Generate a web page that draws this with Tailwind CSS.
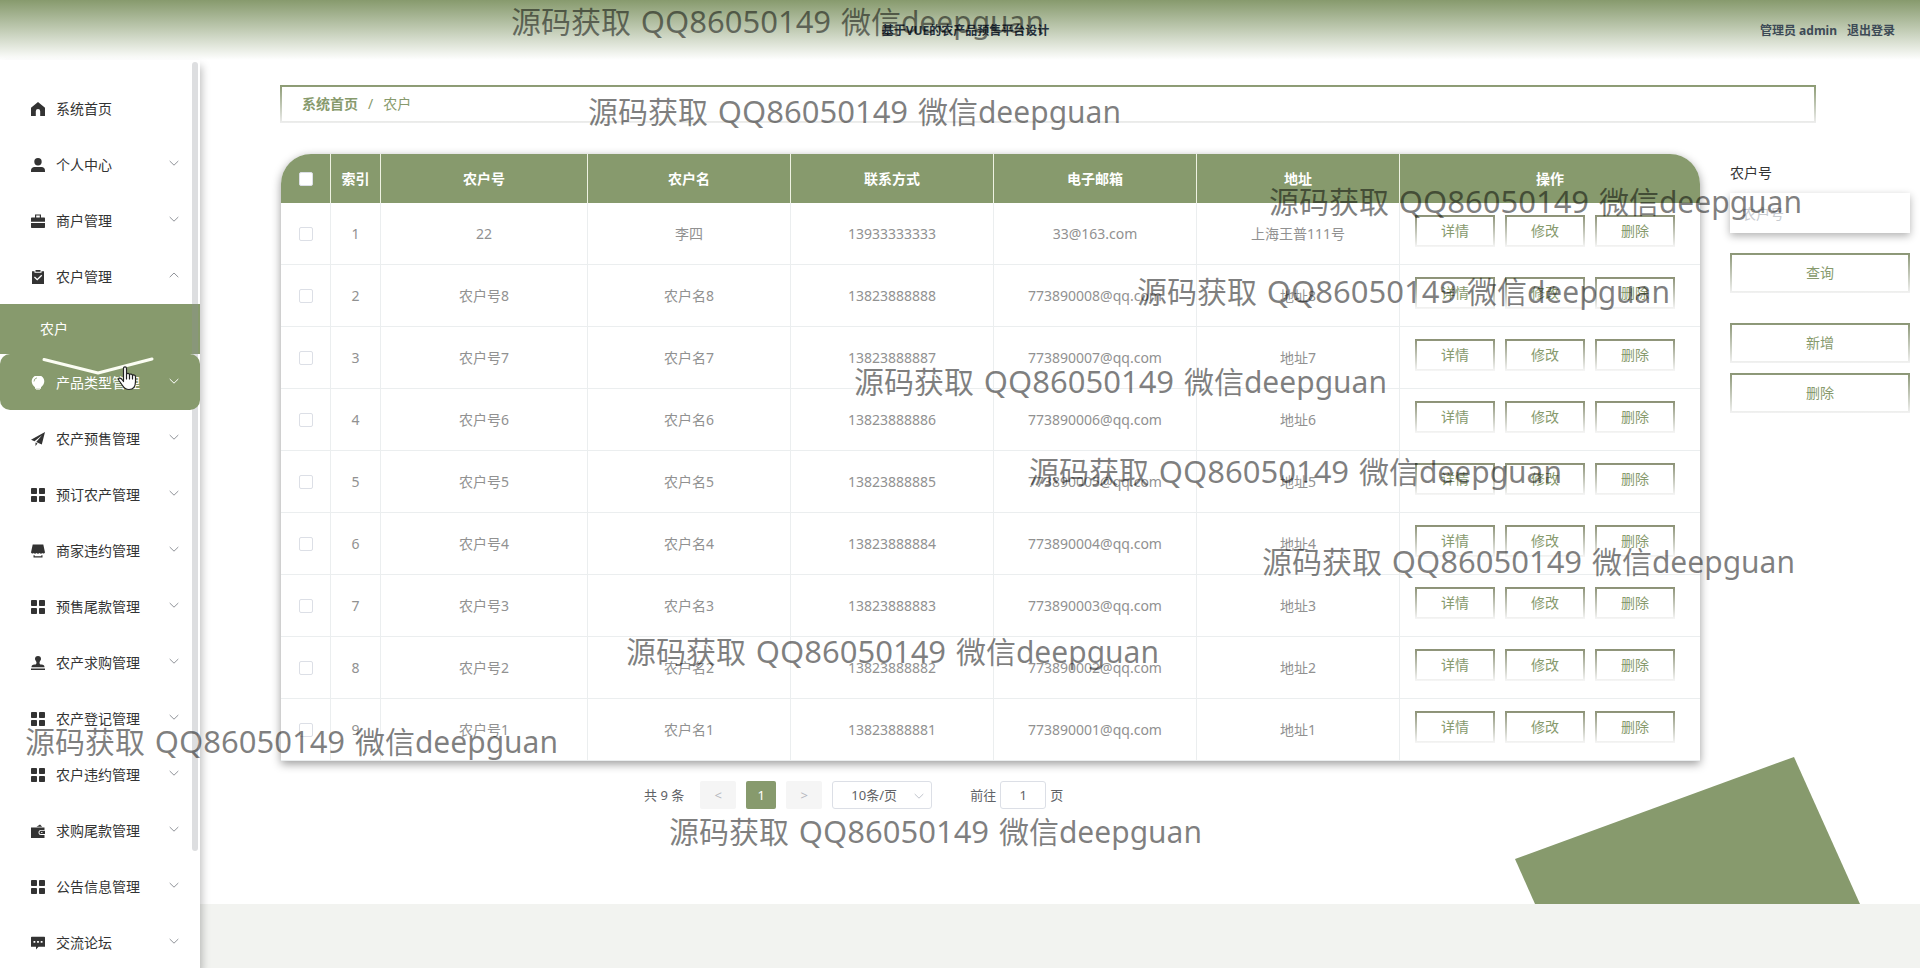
<!DOCTYPE html>
<html lang="zh-CN">
<head>
<meta charset="utf-8">
<title>基于VUE的农产品预售平台设计</title>
<script src="https://cdn.jsdelivr.net/npm/@tailwindcss/browser@4"></script>
</head>
<body class="relative h-screen overflow-hidden bg-white font-['Noto_Sans','Noto_Sans_CJK_SC',sans-serif] text-sm text-[#333]">

<svg class="hidden" aria-hidden="true">
  <symbol id="home" viewBox="0 0 14 14"><path d="M7 0 0 5.800V14h4.800V9.200a2.200 2.200 0 0 1 4.400 0V14H14V5.800z"/></symbol>
  <symbol id="user" viewBox="0 0 14 14"><circle cx="7" cy="3.800" r="3.700"/><path d="M0 14v-1.600C0 10.300 1.500 8.900 3.400 8.900h7.200c1.900 0 3.400 1.400 3.400 3.500V14z"/></symbol>
  <symbol id="case" viewBox="0 0 14 14"><path d="M4 3.500V.5h6v3h3.300c.4 0 .7.300.7.700v3.600H0V4.200c0-.4.300-.7.700-.7zm1.200 0h3.600V1.600H5.200zM0 8.900h14v4.400c0 .4-.3.700-.7.700H.7c-.4 0-.7-.3-.7-.7z" fill-rule="evenodd"/></symbol>
  <symbol id="claim" viewBox="0 0 14 14"><path d="M4.500 0h5v1.800h-5z"/><path d="M1 1.200h2.500v1.500h7V1.200H13V14H1zm5.200 9.300 5-4.800-.9-.9-4.100 3.900-2.300-2.100-.9.900z" fill-rule="evenodd"/></symbol>
  <symbol id="bulb" viewBox="0 0 14 14"><path d="M7 -.8C3.300-.8.700 2 .7 5.300c0 2.700 1.600 4.400 3.300 5.900v1.600h6v-1.600c1.700-1.500 3.300-3.200 3.300-5.900C13.300 2 10.700-.8 7-.8z"/><path d="M5 13.400h4v1H5z"/><path d="M3 5.500a3.800 3.800 0 0 1 3-3.700" fill="none" stroke="#879a6d" stroke-width=".8"/></symbol>
  <symbol id="plane" viewBox="0 0 14 14"><path d="M14 0 0 7.800l3.500 1.500L11 3.200 5.200 10l5.600 2.400zM4.500 10.600V14l2-2.500z"/></symbol>
  <symbol id="menu" viewBox="0 0 14 14"><rect width="6" height="6" rx=".8"/><rect x="8" width="6" height="6" rx=".8"/><rect y="8" width="6" height="6" rx=".8"/><rect x="8" y="8" width="6" height="6" rx=".8"/></symbol>
  <symbol id="shop" viewBox="0 0 14 14"><path d="M1.700.5h10.600L14 8.500c-.6 1.200-1.900 1.300-2.600.4-.8 1-2 1-2.900 0-.8 1-2.200 1-3 0-.9 1-2.100 1-2.900 0-.7.900-2 .8-2.600-.4z"/><path d="M2.500 11.200h1.200v1h6.600v-1h1.200v2.300h-9z"/></symbol>
  <symbol id="stamp" viewBox="0 0 14 14"><path d="M7 0a3 3 0 0 0-3 3c0 1.500 1.500 2.200 1.500 3.800 0 1.400-.7 1.700-2 1.700C1.400 8.500.5 9.600.5 11.200h13c0-1.600-.9-2.700-3-2.700-1.300 0-2-.3-2-1.700C8.500 5.200 10 4.500 10 3a3 3 0 0 0-3-3zM0 12.400h14V14H0z"/></symbol>
  <symbol id="wallet" viewBox="0 0 14 14"><path d="M5.500 2.800 9 .5l2.200 2.300z"/><path d="M0 3.400h13.500v2.500H10a2.500 2.500 0 0 0 0 5h3.500V14H0z"/><path d="M10 6.800h4V10h-4a1.600 1.600 0 0 1 0-3.200zm.2 1.100v1h1.200v-1z" fill-rule="evenodd"/></symbol>
  <symbol id="chat" viewBox="0 0 14 14"><path d="M.7.8h12.600c.4 0 .7.300.7.700v9.300H7.500L5 13.500v-2.700H0V1.500C0 1.100.3.800.7.800zM2.500 5v1.700h1.800V5zm3.600 0v1.700h1.800V5zm3.600 0v1.700h1.800V5z" fill-rule="evenodd"/></symbol>
  <symbol id="down" viewBox="0 0 10 10"><path d="M.7 3 5 7.200 9.300 3" fill="none" stroke="currentColor"/></symbol>
  <symbol id="up" viewBox="0 0 10 10"><path d="M.7 7.200 5 3l4.300 4.200" fill="none" stroke="currentColor"/></symbol>
</svg>

<div class="flex h-full flex-col">
  <header class="grid h-[60px] shrink-0 grid-cols-[1fr_auto_1fr] items-center bg-linear-to-b from-[#879a6d] to-white pt-0.5 pr-[25px] pl-9 text-xs font-bold text-[#3d4a56]">
    <span></span>
    <h1 class="text-[#25303c]">基于VUE的农产品预售平台设计</h1>
    <div class="flex justify-end gap-2.5"><span>管理员 admin</span><a href="#logout">退出登录</a></div>
  </header>

  <div class="flex min-h-0 flex-1">
    <aside class="relative z-10 w-[200px] shrink-0 bg-white shadow-[2px_6px_8px_rgba(0,0,0,0.25)]">
      <nav class="h-full overflow-hidden pt-5"><ul id="nav"></ul></nav>
      <div class="absolute top-0.5 right-0.5 h-[789px] w-1.5 rounded-full bg-[#909399]/30"></div>
    </aside>

    <div class="flex min-w-0 flex-1 flex-col">
      <main class="relative flex-1 overflow-hidden pt-[25px]">
        <svg class="absolute right-[60px] bottom-0 h-[147px] w-[345px] fill-[#879a6d]" viewBox="0 0 345 147"><path d="M0 102 279 0l66 147H20z"/></svg>

        <nav class="relative mr-[104px] ml-20 flex h-[38px] items-center gap-2.5 border-2 pl-5 text-[#879a6d] [border-image:linear-gradient(#8b9a72,#eeeeee)_2]" aria-label="breadcrumb">
          <a href="#home" class="font-bold">系统首页</a><span>/</span><span>农户</span>
        </nav>

        <div class="relative mt-[31px] flex items-start gap-[30px] pr-2.5 pl-[81px]">
          <section class="min-w-0 flex-1">
            <div class="overflow-hidden rounded-t-[30px] bg-white shadow-[0_3px_10px_rgba(0,0,0,0.4)]">
              <table class="w-full table-fixed border-separate border-spacing-0 text-center text-[#919191]">
                <colgroup><col class="w-[50px]"><col class="w-[50px]"><col class="w-[207px]"><col><col><col><col><col class="w-[300px]"></colgroup>
                <thead id="head" class="bg-[#879a6d] text-white"></thead>
                <tbody id="rows"></tbody>
              </table>
            </div>
            <div class="mt-5 flex items-center pl-[363px] text-[13px] text-[#606266]">
              <span class="mr-4">共 9 条</span>
              <button class="mr-2.5 h-7 w-9 rounded-xs bg-[#f5f5f5] text-[#b5b8be]" disabled>&lt;</button>
              <button class="mr-2.5 h-7 w-[30px] rounded-xs bg-[#879a6d] text-white">1</button>
              <button class="mr-2.5 h-7 w-9 rounded-xs bg-[#f5f5f5] text-[#b5b8be]" disabled>&gt;</button>
              <div class="relative mr-[38px]">
                <select aria-label="每页条数" class="h-7 w-[100px] appearance-none rounded-[3px] border border-[#dcdfe6] bg-white pr-4 text-center"><option>10条/页</option></select>
                <svg class="absolute top-2.5 right-2 size-2.5 text-[#c0c4cc]"><use href="#down"/></svg>
              </div>
              <label class="flex items-center">前往<input value="1" class="mx-1 h-7 w-[46px] rounded-[3px] border border-[#dcdfe6] text-center">页</label>
            </div>
          </section>

          <form class="flex w-[180px] shrink-0 flex-col pt-2">
            <label for="no" class="leading-[22px]">农户号</label>
            <input id="no" placeholder="农户号" class="mt-[9px] h-10 bg-white px-3 shadow-[0_3px_8px_rgba(0,0,0,0.3)] placeholder:text-[#c8cbd0]">
            <button type="button" class="mt-5 h-10 border-2 text-[#879a6d] [border-image:linear-gradient(#8b9675,#f2f2f2)_2]">查询</button>
            <button type="button" class="mt-[30px] h-10 border-2 text-[#879a6d] [border-image:linear-gradient(#8b9675,#f2f2f2)_2]">新增</button>
            <button type="button" class="mt-2.5 h-10 border-2 text-[#879a6d] [border-image:linear-gradient(#8b9675,#f2f2f2)_2]">删除</button>
          </form>
        </div>
      </main>
      <footer class="h-16 shrink-0 bg-[#f2f3f0]"></footer>
    </div>
  </div>
</div>

<!-- pointer and its highlight chevron -->
<svg class="absolute top-[356px] left-[42px] z-20 h-5 w-28" viewBox="0 0 112 20" fill="none" stroke="#fbfdf3" stroke-width="3" stroke-linecap="round" stroke-linejoin="round"><path d="M2 3.500 56 17 110 3"/></svg>
<svg class="absolute top-[366px] left-[118px] z-20 h-[25px] w-[19px]" viewBox="0 0 19 25" fill="#fff" stroke="#222" stroke-width="1.200" stroke-linejoin="round" stroke-linecap="round"><path d="M5.500 15.500V2.500c0-2.300 3-2.300 3 0v6c.3-1.700 3-1.500 3 .5.400-1.500 3-1.300 3 .7.500-1.200 3-1 3 1.300v4.500c0 5-2 8-6.500 8-3.500 0-5-1.500-6.500-4l-3.500-5c-1.200-2 .8-3.500 2.500-1.500z"/><path d="M8.500 8.500v4.500M11.500 9v4M14.500 10v3" fill="none"/></svg>

<div id="marks" class="pointer-events-none absolute inset-0 z-30 overflow-hidden text-[30px] leading-10 whitespace-nowrap text-black/50" aria-hidden="true"></div>

<script>
const menu = [['home','系统首页'],['user','个人中心'],['case','商户管理'],['claim','农户管理'],['bulb','产品类型管理'],['plane','农产预售管理'],['menu','预订农产管理'],['shop','商家违约管理'],['menu','预售尾款管理'],['stamp','农产求购管理'],['menu','农产登记管理'],['menu','农户违约管理'],['wallet','求购尾款管理'],['menu','公告信息管理'],['chat','交流论坛']];
document.getElementById('nav').innerHTML = menu.map(([icon, name], i) => {
  const hot = i === 4;
  const arrow = i === 0 ? '' : `<svg class="mb-1 ml-auto size-2.5 ${hot ? 'text-white' : 'text-[#909399]'}"><use href="#${i === 3 ? 'up' : 'down'}"/></svg>`;
  const sub = i === 3 ? '<ul class="bg-[#879a6d]"><li><a href="#farmers" class="flex h-[50px] items-center pl-10 text-white">农户</a></li></ul>' : '';
  return `<li><button class="flex h-14 w-full items-center pt-0.5 pr-[21px] pl-[31px] ${hot ? 'relative z-10 rounded-[10px] bg-[#879a6d] text-white' : ''}"><svg class="mr-[11px] size-3.5 overflow-visible fill-current"><use href="#${icon}"/></svg>${name}${arrow}</button>${sub}</li>`;
}).join('');

const box = label => `<input type="checkbox" aria-label="${label}" class="block mx-auto size-3.5 appearance-none rounded-xs border border-[#dcdfe6] bg-white">`;
const heads = [box('全选'),'索引','农户号','农户名','联系方式','电子邮箱','地址','操作'];
document.getElementById('head').innerHTML = '<tr>' + heads.map(h => `<th class="h-[49px] border-r border-[#eef2e2] font-bold last:border-r-0">${h}</th>`).join('') + '</tr>';

const data = [['22','李四','13933333333','33@163.com','上海王普111号']];
for (let n = 8; n > 0; n--) data.push(['农户号' + n, '农户名' + n, '1382388888' + n, '77389000' + n + '@qq.com', '地址' + n]);
const acts = ['详情','修改','删除'].map(a => `<button class="h-8 w-20 border-2 text-[#879a6d] [border-image:linear-gradient(#8b9175,#f6f6f6)_2]">${a}</button>`).join('');
document.getElementById('rows').innerHTML = data.map((r, i) => '<tr>' + [box('选择' + (i + 1)), i + 1, ...r].map(c => `<td class="h-[62px] border-r border-b border-[#ebeeef]">${c}</td>`).join('') + `<td class="h-[62px] border-b border-[#ebeeef]"><div class="flex gap-2.5 pb-1.5 pl-[15px]">${acts}</div></td></tr>`).join('');

const marks = [[511,1],[588,91],[1269,181],[1137,271],[854,361],[1029,451],[1262,541],[626,631],[25,721],[669,811]];
document.getElementById('marks').innerHTML = marks.map(([x, y]) => `<p class="absolute" style="left:${x}px;top:${y}px">源码获取 <span class="mx-0.5 text-[31px]">QQ86050149</span> 微信deepguan</p>`).join('');
</script>
</body>
</html>
